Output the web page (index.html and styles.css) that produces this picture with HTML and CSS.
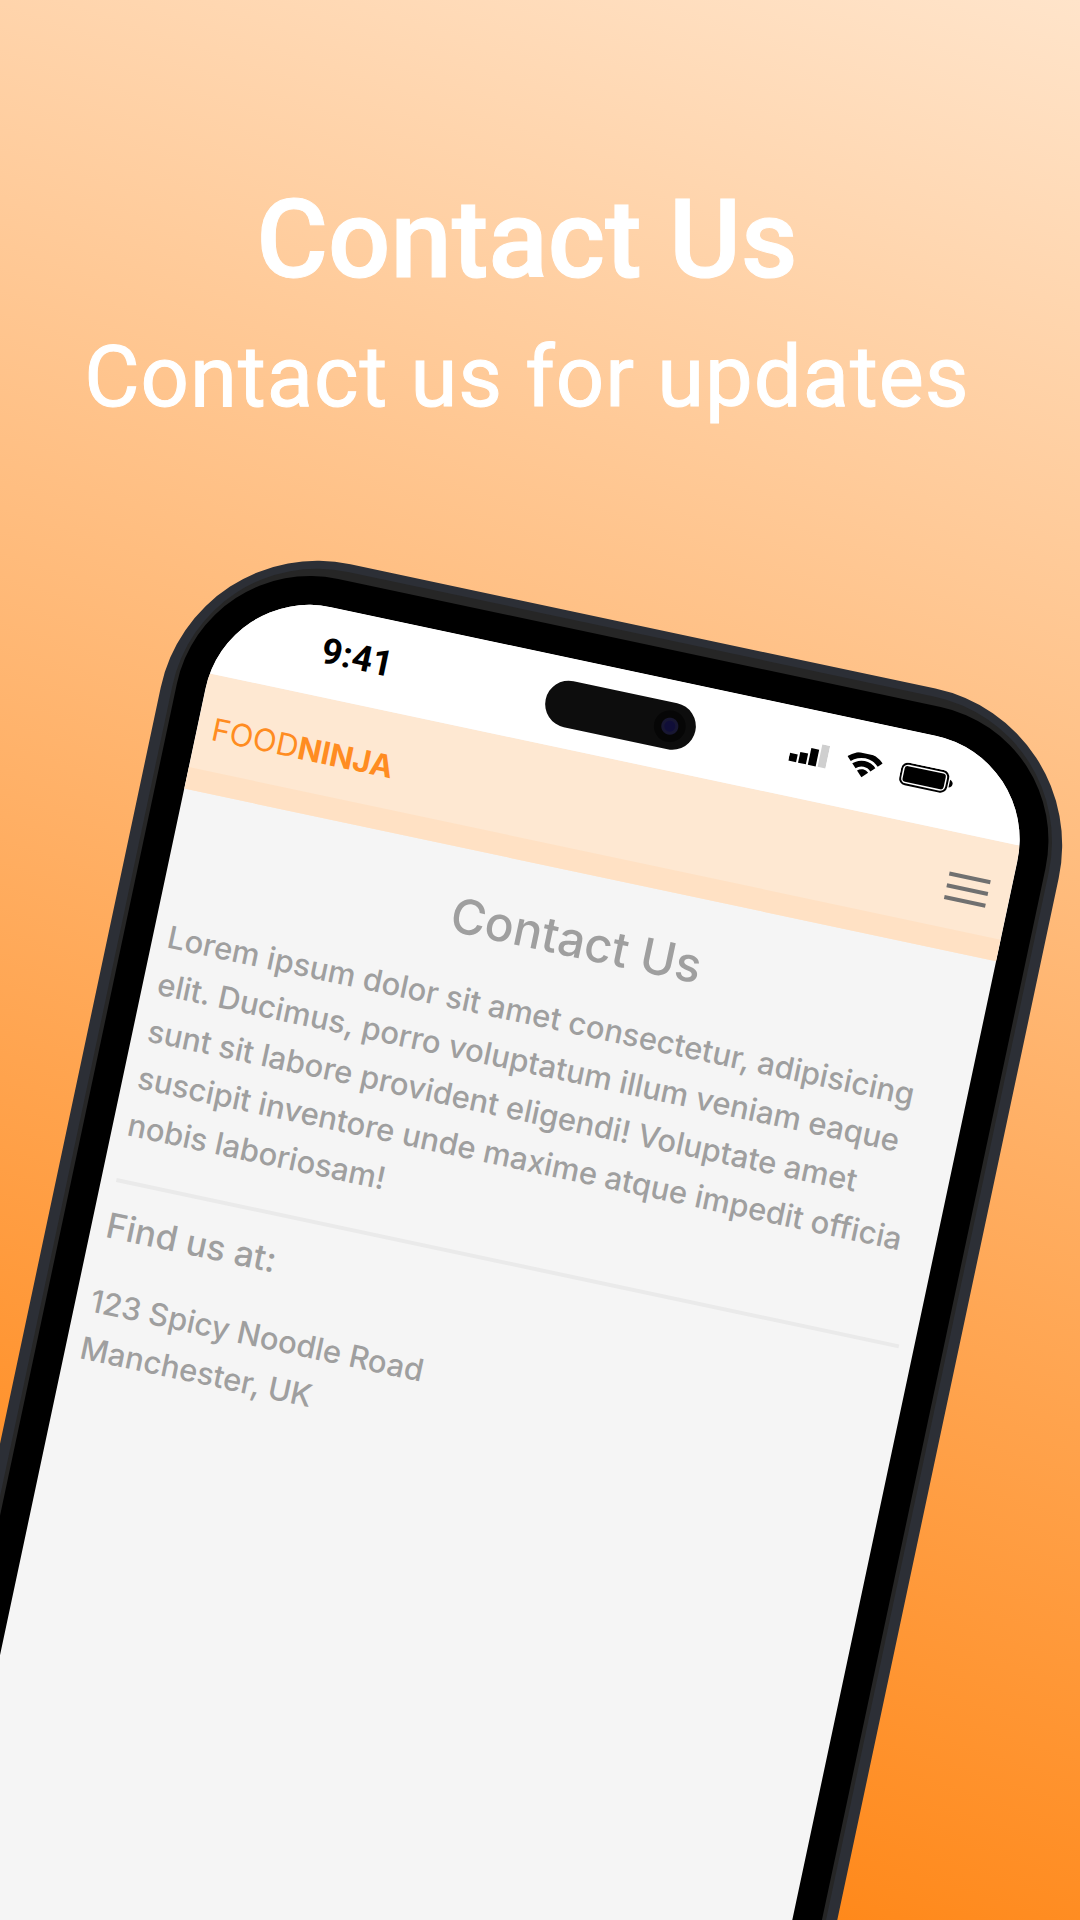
FILE: index.html
```html
<!DOCTYPE html>
<html lang="en">
<head>
  <meta charset="utf-8">
  <meta name="viewport" content="width=device-width, initial-scale=1">
  <title>Food Ninja – Contact Us</title>
  <link rel="stylesheet" href="styles.css">
</head>
<body>
  <main class="poster">
    <header class="hero">
      <h1 class="hero-title">Contact Us</h1>
      <p class="hero-subtitle">Contact us for updates</p>
    </header>

    <section class="phone" aria-label="App preview">
      <div class="phone-rim">
        <div class="phone-bezel">
          <div class="screen">
            <div class="status-bar">
              <time class="clock">9:41</time>
              <div class="island"><span class="camera"></span></div>
              <div class="status-icons">
                <svg width="38" height="24" viewBox="0 0 38 24" aria-hidden="true">
                  <rect x="0" y="15" width="8" height="8"/>
                  <rect x="10" y="12" width="8" height="11"/>
                  <rect x="20" y="6" width="8" height="17"/>
                  <rect x="30" y="0" width="8" height="23" fill="#cfcfcf"/>
                </svg>
                <svg width="36" height="25" viewBox="0 0 36 25" aria-hidden="true">
                  <path d="M0 6.300A25.400 25.400 0 0 1 36 6.300L31.800 10.500A19.500 19.500 0 0 0 4.200 10.500Z"/>
                  <path d="M6.200 12.400A16.700 16.700 0 0 1 29.800 12.400L25.600 16.600A10.800 10.800 0 0 0 10.400 16.600Z"/>
                  <path d="M12.300 18.400A8.100 8.100 0 0 1 23.700 18.400L18 24Z"/>
                </svg>
                <svg width="54" height="24" viewBox="0 0 54 24" aria-hidden="true">
                  <rect x="1" y="1" width="47" height="21" rx="6" fill="none" stroke="#000" stroke-width="2"/>
                  <rect x="3.500" y="3.500" width="42" height="16" rx="3"/>
                  <path d="M50.300 8c4.500 1.500 4.500 6.500 0 8Z"/>
                </svg>
              </div>
            </div>

            <nav class="navbar">
              <a class="brand" href="#">FOOD<strong>NINJA</strong></a>
              <button class="menu-button" type="button" aria-label="Menu">
                <span class="menu-line"></span>
                <span class="menu-line"></span>
                <span class="menu-line"></span>
              </button>
            </nav>

            <article class="content">
              <h2 class="content-title">Contact Us</h2>
              <p class="text">Lorem ipsum dolor sit amet consectetur, adipisicing elit. Ducimus, porro voluptatum illum veniam eaque sunt sit labore provident eligendi! Voluptate amet suscipit inventore unde maxime atque impedit officia nobis laboriosam!</p>
              <hr class="divider">
              <h3 class="find-title">Find us at:</h3>
              <address class="text">123 Spicy Noodle Road<br>Manchester, UK</address>
            </article>
          </div>
        </div>
      </div>
    </section>
  </main>
</body>
</html>
```
FILE: styles.css
```css
* {
  box-sizing: border-box;
}

body {
  margin: 0;
  font-family: Inter, "Liberation Sans", sans-serif;
}

.poster {
  display: flex;
  flex-direction: column;
  height: 100vh;
  overflow: hidden;
  background: linear-gradient(198deg, #ffe4ca 0%, #ff891b 88%);
}

.hero {
  flex: none;
  height: 531px;
  padding: 174px 26px 0 0;
  color: #fff;
  font-family: Roboto, sans-serif;
  text-align: center;
}

.hero-title {
  margin: 0;
  font-size: 110px;
  line-height: 132px;
  font-weight: 500;
  -webkit-text-stroke: 1px #fff;
}

.hero-subtitle {
  margin: 22px 0 0;
  font-size: 85px;
  line-height: 98px;
  letter-spacing: 1px;
  white-space: nowrap;
  -webkit-text-stroke: 1px #fff;
}

.phone {
  flex: none;
  width: 85%;
  margin-left: 18%;
  padding: 8px 11px;
  border-radius: 160px;
  background: #2c2f36;
  transform: rotate(12deg);
  transform-origin: 0 0;
}

.phone-rim {
  padding: 9px 4px;
  border-radius: 148px;
  background: #262626;
}

.phone-bezel {
  padding: 29px;
  border-radius: 136px;
  background: #000;
}

.screen {
  min-height: 1800px;
  overflow: hidden;
  border-radius: 106px;
  background: #f5f5f5;
}

.status-bar {
  position: relative;
  display: flex;
  align-items: center;
  justify-content: space-between;
  height: 90px;
  padding: 0 79px 2px 106px;
  background: #fff;
}

.clock {
  font-family: Roboto, sans-serif;
  font-size: 36px;
  line-height: 42px;
  font-weight: 700;
}

.island {
  position: absolute;
  top: 22px;
  left: 335px;
  display: flex;
  align-items: center;
  justify-content: flex-end;
  width: 153px;
  height: 47px;
  padding-right: 10px;
  border-radius: 24px;
  background: #0d0d0d;
}

.camera {
  width: 32px;
  height: 32px;
  border-radius: 50%;
  background: radial-gradient(circle, #100e38 5px, #181733 6px, #181733 8px, #060606 9px);
}

.status-icons {
  display: flex;
  align-items: center;
  gap: 19px;
}

.navbar {
  display: flex;
  align-items: center;
  justify-content: space-between;
  height: 118px;
  padding: 0 22px 8px 15px;
  border-bottom: 22px solid #ffe1c4;
  background: #fee8d2;
}

.brand {
  padding-top: 20px;
  color: #ff8c21;
  font-size: 31px;
  line-height: 36px;
  text-decoration: none;
}

.menu-button {
  display: flex;
  flex-direction: column;
  gap: 8px;
  margin-top: 20px;
  padding: 0;
  border: 0;
  background: none;
}

.menu-line {
  width: 42px;
  height: 4px;
  background: #707070;
}

.content {
  padding: 36px 15px;
  color: #9f9f9f;
}

.content-title {
  margin: 0 0 26px;
  font-size: 48px;
  line-height: 62px;
  font-weight: 500;
  text-align: center;
}

.text {
  margin: 0;
  font-size: 31px;
  line-height: 48px;
  font-style: normal;
  font-weight: 450;
}

.divider {
  height: 4px;
  margin: 31px 0 21px;
  border: 0;
  background: #eaeaea;
}

.find-title {
  margin: 0 0 32px;
  font-size: 35px;
  line-height: 44px;
  font-weight: 500;
}
```
